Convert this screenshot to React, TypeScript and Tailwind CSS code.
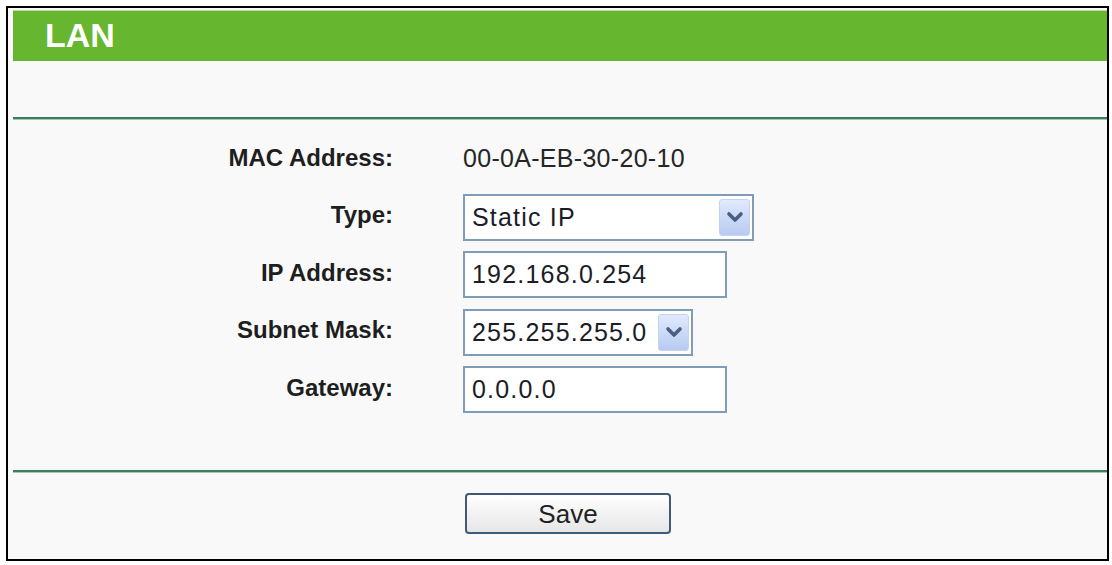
import React from 'react'

const rows = [
  { label: 'MAC Address:', kind: 'text', value: '00-0A-EB-30-20-10' },
  { label: 'Type:', kind: 'select', value: 'Static IP', width: 'w-[291px]' },
  { label: 'IP Address:', kind: 'input', value: '192.168.0.254' },
  { label: 'Subnet Mask:', kind: 'select', value: '255.255.255.0', width: 'w-[230px]' },
  { label: 'Gateway:', kind: 'input', value: '0.0.0.0' },
]

function Chevron() {
  return (
    <svg width="18" height="12" viewBox="0 0 18 12" fill="none">
      <path d="M3 3 L9 9 L15 3" stroke="#4b5e82" strokeWidth="3.6" strokeLinecap="round" strokeLinejoin="round" />
    </svg>
  )
}

function Select({ value, width }: { value: string; width?: string }) {
  return (
    <div className={`${width} h-[47px] border-2 border-[#7f9db9] bg-white flex items-center justify-between pl-[7px] pr-[2px]`}>
      <span className="text-[25px] tracking-[1.2px] text-[#1c1c28] leading-none">{value}</span>
      <div className="w-[31px] h-[37px] rounded-[3px] border border-[#c3d3f3] bg-gradient-to-b from-[#e1eafd] to-[#b7caf1] flex items-center justify-center">
        <Chevron />
      </div>
    </div>
  )
}

function Input({ value }: { value: string }) {
  return (
    <div className="w-[264px] h-[47px] border-2 border-[#7f9db9] bg-white flex items-center pl-[7px]">
      <span className="text-[25px] tracking-[1.2px] text-[#1c1c28] leading-none">{value}</span>
    </div>
  )
}

export default function App() {
  return (
    <div className="w-full min-h-screen bg-white pt-[6px] pl-[6px]" style={{ fontFamily: '"Liberation Sans", Arial, sans-serif' }}>
      <div className="w-[1103px] h-[555px] border-2 border-black bg-[#f9f9f9] flex flex-col pl-[5px] pt-[2px]">
        <div className="h-px bg-[#b8dca3]" />
        <div className="h-[50px] bg-[#67b630] flex items-center pl-[32px] pb-[3px]">
          <span className="text-white font-bold text-[34px] leading-none">LAN</span>
        </div>
        <div className="h-[56px]" />
        <div className="h-[2px] bg-[#3b7d5c]" />
        <div className="h-px bg-[#a3c9b3]" />

        <div className="pt-[11px] grid grid-cols-[380px_1fr] gap-x-[70px] auto-rows-[57.5px] items-center">
          {rows.map(row => (
            <React.Fragment key={row.label}>
              <div className="text-right font-bold text-[24px] text-[#1e1e1e] leading-none -mt-[4px]">{row.label}</div>
              <div>
                {row.kind === 'text' && (
                  <span className="text-[25px] tracking-[0.3px] text-[#262626] leading-none">{row.value}</span>
                )}
                {row.kind === 'select' && <Select value={row.value} width={row.width} />}
                {row.kind === 'input' && <Input value={row.value} />}
              </div>
            </React.Fragment>
          ))}
        </div>

        <div className="flex-1" />
        <div className="h-[2px] bg-[#3b7d5c]" />
        <div className="h-px bg-[#a3c9b3]" />
        <div className="h-[86px] pl-[452px] pt-[20px]">
          <button className="w-[206px] h-[41px] rounded-[4px] border-2 border-[#3f5a78] bg-gradient-to-b from-white to-[#e6e6e6] text-[26px] text-[#222] leading-none">
            Save
          </button>
        </div>
      </div>
    </div>
  )
}
